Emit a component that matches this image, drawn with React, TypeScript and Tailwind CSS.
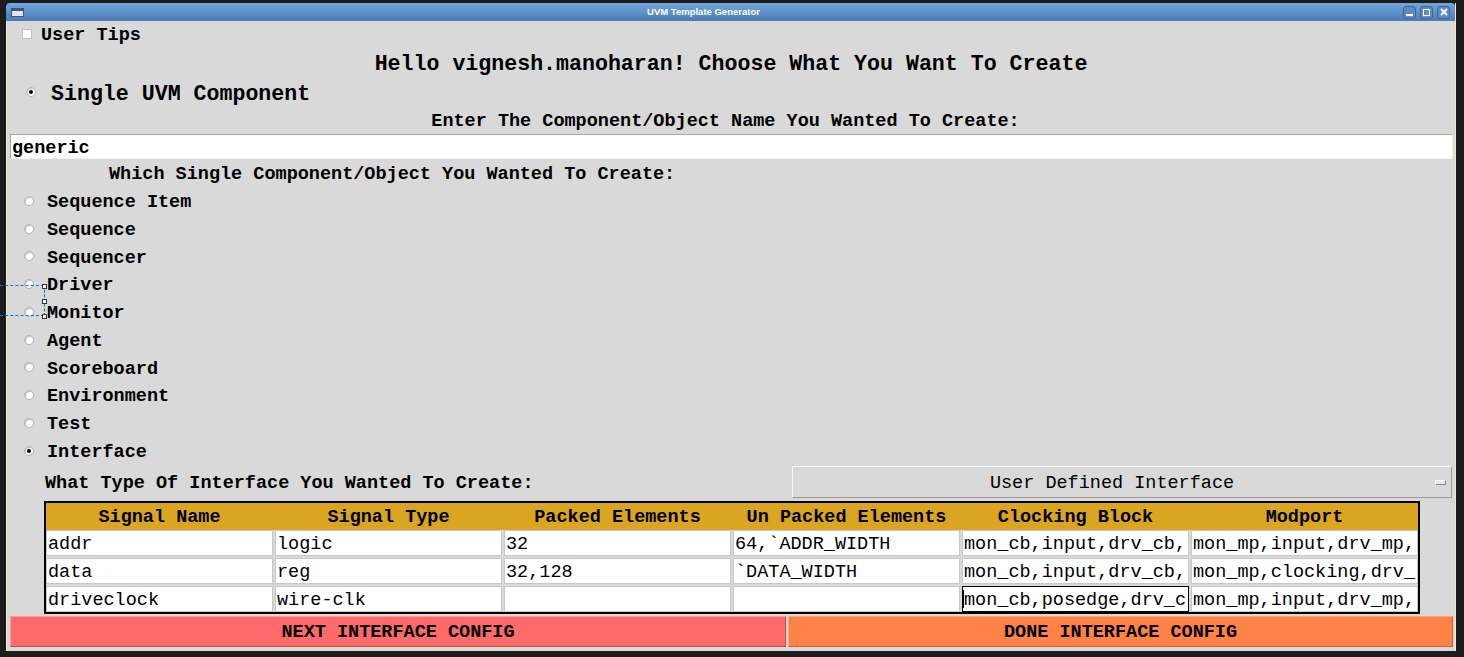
import React from 'react';

const components = [
  'Sequence Item',
  'Sequence',
  'Sequencer',
  'Driver',
  'Monitor',
  'Agent',
  'Scoreboard',
  'Environment',
  'Test',
  'Interface',
];

const headers = ['Signal Name', 'Signal Type', 'Packed Elements', 'Un Packed Elements', 'Clocking Block', 'Modport'];

// cell texts as far as the narrow entries show them
const rows = [
  ['addr', 'logic', '32', '64,`ADDR_WIDTH', 'mon_cb,input,drv_cb,', 'mon_mp,input,drv_mp,'],
  ['data', 'reg', '32,128', '`DATA_WIDTH', 'mon_cb,input,drv_cb,', 'mon_mp,clocking,drv_'],
  ['driveclock', 'wire-clk', '', '', 'mon_cb,posedge,drv_c', 'mon_mp,input,drv_mp,'],
];

// text sits a little low in the Tk widgets
const T = ({ children }: { children: React.ReactNode }) => <span className="pt-[5px]">{children}</span>;

const Radio = ({ checked }: { checked?: boolean }) => (
  <span className="w-[10px] h-[10px] rounded-full bg-white border border-[#b4b4b4] shadow-[inset_1px_1px_1px_#c4c4c4] flex items-center justify-center shrink-0">
    {checked && <span className="w-[4px] h-[4px] rounded-full bg-black" />}
  </span>
);

const TitleButton = ({ children }: { children: React.ReactNode }) => (
  <span className="w-[13px] h-[13px] rounded-[3px] bg-[#5d8ac2] border border-[#3b679d] flex items-center justify-center">
    {children}
  </span>
);

export default function App() {
  return (
    <div className="relative w-[1464px] h-[657px] bg-[#1c1c1c] pt-[3px] pl-[6px] pr-[8px] pb-[6px] font-['Liberation_Mono',monospace] text-black overflow-hidden">
      <div className="flex flex-col h-full border-r border-[#efe9d0]">
        {/* title bar */}
        <div className="h-[18px] rounded-t-[4px] bg-gradient-to-b from-[#74a5dc] to-[#4a7bb5] flex items-center px-[5px]">
          <span className="w-[13px] h-[9px] bg-[#e4e4e4] border border-[#37577f] border-t-[3px] border-t-[#37577f]" />
          <span className="flex-1 text-center pr-[20px] font-['Liberation_Sans',sans-serif] font-bold text-[9.5px] text-white">
            UVM Template Generator
          </span>
          <div className="flex gap-[4px]">
            <TitleButton>
              <span className="w-[7px] h-[2px] bg-white mt-[5px]" />
            </TitleButton>
            <TitleButton>
              <span className="w-[7px] h-[7px] border-[1.5px] border-white" />
            </TitleButton>
            <TitleButton>
              <svg width="8" height="8" viewBox="0 0 8 8">
                <path d="M1 1L7 7M7 1L1 7" stroke="white" strokeWidth="1.8" />
              </svg>
            </TitleButton>
          </div>
        </div>

        {/* content */}
        <div className="flex-1 flex flex-col bg-[#d9d9d9] border-l border-[#efe9d0] text-[18.5px] font-bold leading-none">
          <div className="h-[26px] flex items-center pl-[15px]">
            <span className="w-[10px] h-[10px] bg-white border border-[#c0c0c0]" />
            <span className="ml-[9px] pt-[5px]">User Tips</span>
          </div>
          <div className="h-[30px] flex items-center justify-center text-[21.6px]">
            <T>Hello vignesh.manoharan! Choose What You Want To Create</T>
          </div>
          <div className="h-[30px] flex items-center pl-[19px] text-[21.6px]">
            <Radio checked />
            <span className="ml-[15px] pt-[5px]">Single UVM Component</span>
          </div>
          <div className="h-[26px] flex items-center justify-center pr-[11px]">
            <T>Enter The Component/Object Name You Wanted To Create:</T>
          </div>
          <div className="mt-[1px] ml-[3px] mr-[2px] h-[25px] bg-white border border-[#a8a8a8] border-b-[#f4f4f4] border-r-[#f4f4f4] flex items-center pl-[1px]">
            <T>generic</T>
          </div>
          <div className="h-[28px] flex items-center pl-[102px]">
            <T>Which Single Component/Object You Wanted To Create:</T>
          </div>
          {components.map((c) => (
            <div key={c} className="h-[27.78px] flex items-center pl-[17px]">
              <Radio checked={c === 'Interface'} />
              <span className="ml-[13px] pt-[5px]">{c}</span>
            </div>
          ))}
          <div className="h-[35px] flex items-center pl-[38px] pr-[3px]">
            <T>What Type Of Interface You Wanted To Create:</T>
            <div className="ml-auto w-[660px] h-[32px] relative flex items-center justify-center pr-[20px] bg-[#d9d9d9] border border-t-[#f8f8f8] border-l-[#f8f8f8] border-b-[#9a9a9a] border-r-[#9a9a9a] font-normal">
              <T>User Defined Interface</T>
              <span className="absolute right-[5px] top-[13px] w-[11px] h-[5px] bg-[#e6e6e6] border border-t-white border-l-white border-b-[#8a8a8a] border-r-[#8a8a8a]" />
            </div>
          </div>

          {/* table */}
          <div className="mt-[1px] ml-[37px] w-[1376px] border-2 border-black bg-[#d9d9d9]">
            <div className="h-[27px] grid grid-cols-6 gap-x-[2px] bg-[#daa520]">
              {headers.map((h) => (
                <div key={h} className="flex items-center justify-center">
                  <T>{h}</T>
                </div>
              ))}
            </div>
            <div className="flex flex-col gap-y-[2px]">
              {rows.map((r, ri) => (
                <div key={ri} className="h-[26px] grid grid-cols-6 gap-x-[2px]">
                  {r.map((v, ci) => {
                    const focused = ri === 2 && ci === 4;
                    return (
                      <div
                        key={ci}
                        className={
                          focused
                            ? 'bg-white border border-black flex items-center overflow-hidden whitespace-nowrap font-normal'
                            : 'bg-white border border-[#c8c8c8] flex items-center overflow-hidden whitespace-nowrap pl-[1px] font-normal'
                        }
                      >
                        {focused && <span className="w-[1px] h-[18px] bg-black shrink-0" />}
                        <T>{v}</T>
                      </div>
                    );
                  })}
                </div>
              ))}
            </div>
          </div>

          {/* buttons */}
          <div className="mt-[2px] ml-[3px] mr-[2px] h-[31px] flex gap-[2px]">
            <div className="w-[776px] flex items-center justify-center bg-[#ff6a6a] border border-t-[#ff9a9a] border-l-[#ff9a9a] border-b-[#c94a4a] border-r-[#c94a4a]">
              <T>NEXT INTERFACE CONFIG</T>
            </div>
            <div className="flex-1 flex items-center justify-center bg-[#ff8247] border border-t-[#ffa87e] border-l-[#ffa87e] border-b-[#c8602f] border-r-[#c8602f]">
              <T>DONE INTERFACE CONFIG</T>
            </div>
          </div>
        </div>
      </div>

      {/* selection handles overlay */}
      <div className="absolute left-0 top-[285px] w-[44px] border-t border-dashed border-[#0b6fd8]" />
      <div className="absolute left-0 top-[315px] w-[44px] border-t border-dashed border-[#0b6fd8]" />
      <div className="absolute left-[44px] top-[285px] h-[31px] border-l border-dashed border-[#0b6fd8]" />
      <div className="absolute left-[42px] top-[284px] w-[5px] h-[5px] bg-white border border-[#333]" />
      <div className="absolute left-[42px] top-[299px] w-[5px] h-[5px] bg-white border border-[#333]" />
      <div className="absolute left-[42px] top-[314px] w-[5px] h-[5px] bg-white border border-[#333]" />
    </div>
  );
}
